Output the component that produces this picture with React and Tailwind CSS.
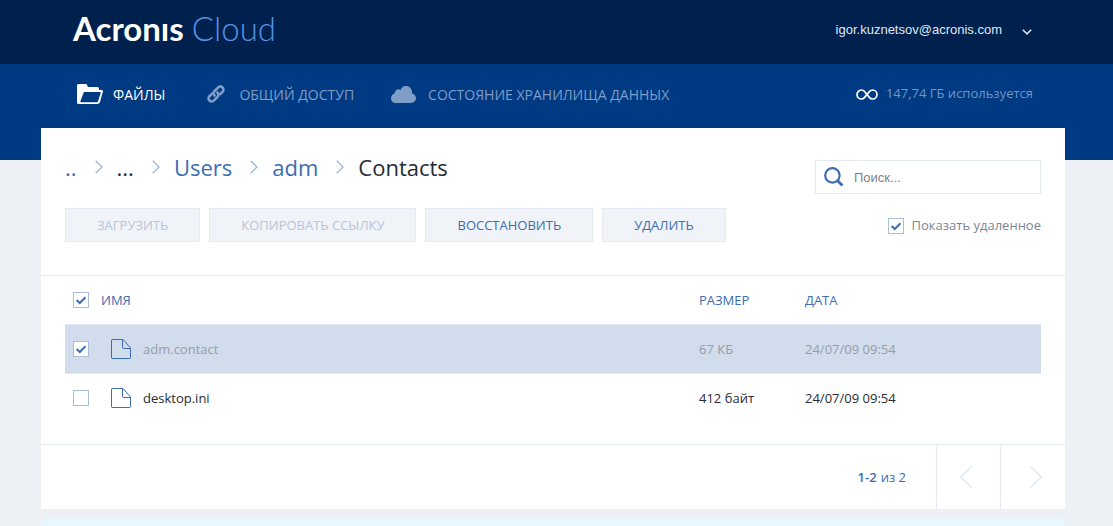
import React, { useState } from "react";

const initialFiles = [
  { id: 1, name: "adm.contact", size: "67 КБ", date: "24/07/09 09:54", deleted: true },
  { id: 2, name: "desktop.ini", size: "412 байт", date: "24/07/09 09:54", deleted: false },
];

const crumbs = [
  { label: "..", href: "#up" },
  { label: "..." },
  { label: "Users", href: "#users" },
  { label: "adm", href: "#adm" },
  { label: "Contacts" },
];

function Checkbox({ id, label, checked, onChange }) {
  return (
    <span className="grid size-4 shrink-0">
      <input
        id={id}
        type="checkbox"
        aria-label={label}
        checked={checked}
        onChange={onChange}
        className="col-start-1 row-start-1 size-4 appearance-none border border-[#a9bddc] bg-white"
      />
      {checked && (
        <svg viewBox="0 0 16 16" className="pointer-events-none col-start-1 row-start-1 size-4">
          <path d="M3.6 8 L6.8 11 L12.4 5.2" fill="none" stroke="#3d6db3" strokeWidth="2" />
        </svg>
      )}
    </span>
  );
}

function Chevron({ className, left, strokeWidth = 1.4 }) {
  return (
    <svg viewBox="0 0 8 14" className={className} fill="none" stroke="currentColor" strokeWidth={strokeWidth}>
      <path d={left ? "M7.3 0.7 L1 7 L7.3 13.3" : "M0.7 0.7 L7 7 L0.7 13.3"} />
    </svg>
  );
}

function FolderIcon() {
  return (
    <svg viewBox="0 0 26 20" className="h-5 w-[26px]">
      <path
        fill="#fff"
        fillRule="evenodd"
        d="M1.5 0 H8.5 Q10 0 10.3 1.2 L10.8 3 H20.5 Q22 3 22 4.5 V6 H24.6 Q26.4 6 25.9 7.6 L23 18 Q22.4 20 20.6 20 H1.6 Q0 20 0 18.4 V1.6 Q0 0 1.5 0 Z M7.6 8 Q6.9 8 6.7 8.6 L3.3 17.4 Q3 18.2 3.8 18.2 H20 Q20.8 18.2 21 17.4 L23.7 8.7 Q23.9 8 23.2 8 Z"
      />
    </svg>
  );
}

function LinkIcon() {
  return (
    <svg viewBox="0 0 18 18" className="size-[18px]" fill="none" stroke="currentColor" strokeWidth="2.6" strokeLinecap="round">
      <path d="M7.6 10.6 C6.3 9.2 6.4 7.2 7.6 6 L11 2.6 C12.3 1.3 14.2 1.2 15.5 2.5 C16.8 3.8 16.7 5.7 15.4 7 L13.2 9.2" />
      <path d="M10.4 7.4 C11.7 8.8 11.6 10.8 10.4 12 L7 15.4 C5.7 16.7 3.8 16.8 2.5 15.5 C1.2 14.2 1.3 12.3 2.6 11 L4.8 8.8" />
    </svg>
  );
}

function CloudIcon() {
  return (
    <svg viewBox="0 0 25 17" className="h-[17px] w-[25px]" fill="currentColor">
      <path d="M5 17 C2 17 0 14.9 0 12.2 C0 9.6 1.6 7.9 3.6 7.4 C3.6 5 5.4 3.3 7.6 3.3 C8.3 3.3 9 3.5 9.6 3.9 C10.5 1.5 12.5 0 15 0 C18.4 0 21 2.6 21 6.2 C21 6.6 21 7 20.9 7.4 C23.3 7.8 25 9.7 25 12.1 C25 14.9 22.9 17 20 17 Z" />
    </svg>
  );
}

function InfinityIcon() {
  return (
    <svg viewBox="0 0 22 11" className="h-[11px] w-[22px]" fill="none" stroke="#fff" strokeWidth="1.7">
      <path d="M11 5.5 L8.4 2.4 Q7.2 1 5.5 1 C3 1 1 3 1 5.5 C1 8 3 10 5.5 10 Q7.2 10 8.4 8.6 L13.6 2.4 Q14.8 1 16.5 1 C19 1 21 3 21 5.5 C21 8 19 10 16.5 10 Q14.8 10 13.6 8.6 Z" />
    </svg>
  );
}

function FileIcon() {
  return (
    <svg viewBox="0 0 20 20" className="size-5" fill="none" stroke="#3d6db3" strokeLinejoin="round">
      <path d="M0.5 1.2 Q0.5 0.5 1.2 0.5 H12 L19.5 9 V18.8 Q19.5 19.5 18.8 19.5 H1.2 Q0.5 19.5 0.5 18.8 Z" />
      <path d="M11.5 0.5 V8.5 Q11.5 9.5 12.5 9.5 H19.5" />
    </svg>
  );
}

function ToolButton({ children, disabled }) {
  return (
    <button
      type="button"
      disabled={disabled}
      className="h-[34px] border border-[#e4eaf4] bg-[#f0f3f8] px-[31px] pt-[2px] text-[13px] text-[#3d6db3] disabled:text-[#b9c5d8]"
    >
      {children}
    </button>
  );
}

export default function App() {
  const [selected, setSelected] = useState([1]);
  const [allChecked, setAllChecked] = useState(true);
  const [showDeleted, setShowDeleted] = useState(true);
  const [query, setQuery] = useState("");

  const files = initialFiles.filter((f) => (showDeleted || !f.deleted) && f.name.includes(query));

  const toggleFile = (id) => {
    setSelected(selected.includes(id) ? selected.filter((s) => s !== id) : [...selected, id]);
  };

  const toggleAll = () => {
    setSelected(allChecked ? [] : files.map((f) => f.id));
    setAllChecked(!allChecked);
  };

  return (
    <div className="min-h-screen bg-[#edf0f5] font-['Open_Sans',sans-serif] text-[13px] text-[#262b33]">
      <header className="flex h-16 items-start justify-between bg-[#00204d] pr-[81px] pl-[73px]">
        <a href="#home" className="flex gap-2 pt-2 font-['Lato',sans-serif] text-[33px] leading-10">
          <span className="font-bold text-white">Acronıs</span>
          <span className="font-light text-[#5592e6]">Cloud</span>
        </a>
        <button type="button" className="flex items-center gap-5 pt-5 font-['Liberation_Sans',sans-serif] text-[13px] leading-5 text-[#dfe8f5]">
          igor.kuznetsov@acronis.com
          <svg viewBox="0 0 10 6" className="mt-1 h-[6px] w-[10px]" fill="none" stroke="currentColor" strokeWidth="1.5">
            <path d="M0.8 0.7 L5 4.9 L9.2 0.7" />
          </svg>
        </button>
      </header>

      {/* Navigation */}
      <div className="flex h-24 items-start justify-between bg-[#003a83] pr-20 pl-[77px]">
        <nav className="flex h-[60px] items-center text-[14px] text-[#7f9dc7]">
          <a href="#files" className="mr-[42px] flex items-center gap-[10px] text-white">
            <FolderIcon />
            ФАЙЛЫ
          </a>
          <a href="#shared" className="mr-[37px] flex items-center gap-[14px]">
            <LinkIcon />
            ОБЩИЙ ДОСТУП
          </a>
          <a href="#storage" className="flex items-center gap-3">
            <CloudIcon />
            СОСТОЯНИЕ ХРАНИЛИЩА ДАННЫХ
          </a>
        </nav>
        <div className="flex h-[60px] items-center gap-2 text-[13px] text-[#7095c8]">
          <InfinityIcon />
          147,74 ГБ используется
        </div>
      </div>

      <main className="-mt-8 mr-12 ml-[41px] bg-white">
        <div className="border-b border-[#e6eaf3] px-6 pt-6 pb-[33px]">
          <div className="mb-[14px] flex items-start justify-between">
            <ol className="flex items-center text-[22px] leading-[30px]">
              {crumbs.map((c, i) => (
                <li key={c.label} className="flex items-center">
                  {i > 0 && <Chevron className="mr-[14px] ml-[18px] h-[14px] w-2 text-[#a3b9dc]" />}
                  {c.href ? (
                    <a href={c.href} className="text-[#3d6db3]">{c.label}</a>
                  ) : (
                    <span>{c.label}</span>
                  )}
                </li>
              ))}
            </ol>
            <label className="mt-2 flex h-[34px] w-[226px] items-center gap-[10px] border border-[#e4e8f2] px-2">
              <svg viewBox="0 0 20 20" className="size-5 shrink-0" fill="none" stroke="#3d6db3" strokeWidth="2.2">
                <circle cx="8.4" cy="8.4" r="7.2" />
                <path d="M13.4 13.4 L18.4 18.4" strokeWidth="2.8" />
              </svg>
              <input
                type="text"
                aria-label="Поиск"
                placeholder="Поиск..."
                value={query}
                onChange={(e) => setQuery(e.target.value)}
                className="w-full min-w-0 pt-[2px] font-['Liberation_Sans',sans-serif] text-[13px] outline-none placeholder:text-[#7c7f87]"
              />
            </label>
          </div>

          <div className="flex items-center justify-between">
            <div className="flex gap-[9px]">
              <ToolButton disabled>ЗАГРУЗИТЬ</ToolButton>
              <ToolButton disabled>КОПИРОВАТЬ ССЫЛКУ</ToolButton>
              <ToolButton>ВОССТАНОВИТЬ</ToolButton>
              <ToolButton>УДАЛИТЬ</ToolButton>
            </div>
            <label htmlFor="show-deleted" className="flex items-center gap-2 pt-[2px] text-[#7d8494]">
              <Checkbox id="show-deleted" checked={showDeleted} onChange={() => setShowDeleted(!showDeleted)} />
              Показать удаленное
            </label>
          </div>
        </div>

        {/* File list */}
        <div className="px-6 pb-[22px]">
          <table className="w-full table-fixed text-left">
            <thead>
              <tr className="h-12 text-[#3d6db3]">
                <th className="w-9 pl-2">
                  <Checkbox label="Выбрать все" checked={allChecked} onChange={toggleAll} />
                </th>
                <th className="pt-[2px] font-normal">ИМЯ</th>
                <th className="w-[106px] pt-[2px] font-normal">РАЗМЕР</th>
                <th className="w-[236px] pt-[2px] font-normal">ДАТА</th>
              </tr>
            </thead>
            <tbody>
              {files.map((file) => (
                <tr
                  key={file.id}
                  className={`h-[49px] ${selected.includes(file.id) ? "border-y border-[#dfe7f2] bg-[#d1dcec]" : ""} ${
                    file.deleted ? "text-[#979da8]" : ""
                  }`}
                >
                  <td className="pl-2">
                    <Checkbox label={file.name} checked={selected.includes(file.id)} onChange={() => toggleFile(file.id)} />
                  </td>
                  <td>
                    <span className="flex items-center gap-3 pl-[10px]">
                      <FileIcon />
                      <span className="pt-[2px]">{file.name}</span>
                    </span>
                  </td>
                  <td className="pt-[2px]">{file.size}</td>
                  <td className="pt-[2px]">{file.date}</td>
                </tr>
              ))}
            </tbody>
          </table>
        </div>

        {/* Pager */}
        <div className="flex h-[65px] items-stretch justify-end border-t border-[#e6eaf3] text-[#3d6db3]">
          <p className="flex items-center gap-1 pt-[2px] pr-[30px]">
            <b className="font-semibold">1-2</b> из 2
          </p>
          <button type="button" aria-label="Назад" disabled className="flex w-16 items-center justify-center border-l border-[#e6eaf3] pr-[6px] text-[#e8eef6]">
            <Chevron left className="h-6 w-[14px]" strokeWidth={1.2} />
          </button>
          <button type="button" aria-label="Вперед" disabled className="flex w-[65px] items-center justify-center border-l border-[#e6eaf3] pl-[6px] text-[#e8eef6]">
            <Chevron className="h-6 w-[14px]" strokeWidth={1.2} />
          </button>
        </div>
      </main>

      <div className="mt-[9px] mr-12 ml-[41px] h-2 rounded-t bg-[#e8f6fe]" />
    </div>
  );
}
